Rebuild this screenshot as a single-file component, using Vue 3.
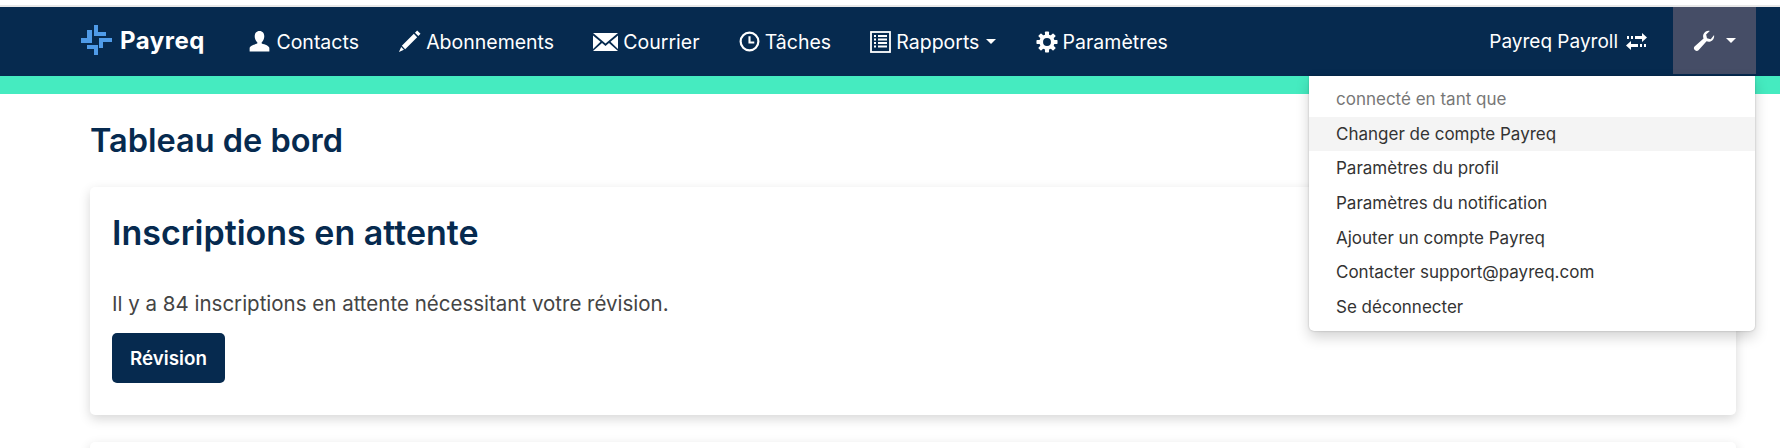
<template>
  <div class="page">
    <div class="top-strip"></div>
    <nav class="navbar">
      <a class="brand">
        <svg class="logo" viewBox="0 0 31 30" width="31" height="30">
          <path d="M6 5h5v13H0v-5h6z" />
          <path d="M13 0h4v7h8v4H13z" />
          <path d="M18 13h13v4h-9v6h-4z" />
          <path d="M6 20h11v10h-4v-6H6z" />
        </svg>
        <span>Payreq</span>
      </a>
      <ul class="nav-links">
        <li>
          <svg class="icon" viewBox="0 0 24 24" width="23" height="23">
            <path d="M12 1c3.300 0 5 2.500 5 5.500 0 2.600-1.200 5-2.700 6.200v1.500c3.500 1 8 2.600 8 4.800v3.500H1.700V19c0-2.200 4.500-3.800 8-4.800v-1.500C8.200 11.500 7 9.100 7 6.500 7 3.500 8.700 1 12 1z" />
          </svg>
          Contacts
        </li>
        <li>
          <svg class="icon" viewBox="0 0 24 24" width="23" height="23">
            <path d="M20 0.500l3.500 3.500-2.300 2.300-3.500-3.500zM16.500 4l3.500 3.500L7.500 20 4 16.500zM3.300 17.800l2.900 2.900L1 23z" />
          </svg>
          Abonnements
        </li>
        <li>
          <svg class="icon" viewBox="0 0 25 20" width="25" height="20">
            <path d="M0 1h25L12.500 11.500zM0 3.500l7.500 6.300L0 17zM25 3.500l-7.500 6.300L25 17zM9 11l3.500 3 3.500-3 9 8H0z" />
          </svg>
          Courrier
        </li>
        <li>
          <svg class="icon" viewBox="0 0 22 22" width="21" height="21">
            <circle cx="11" cy="11" r="9.300" class="line" stroke-width="2.300" />
            <path d="M11 5.500V12h5" class="line" stroke-width="2.200" />
          </svg>
          Tâches
        </li>
        <li>
          <svg class="icon" viewBox="0 0 21 22" width="21" height="22">
            <rect x="1" y="1" width="19" height="20" class="line" stroke-width="1.800" />
            <path d="M4 5h2M8 5h9M4 8.500h2M8 8.500h9M4 12h2M8 12h9M4 15.500h2M8 15.500h9" class="line" stroke-width="1.800" />
          </svg>
          Rapports
          <span class="caret"></span>
        </li>
        <li>
          <svg class="icon" viewBox="0 0 24 24" width="22" height="22">
            <rect v-for="a in teeth" :key="a" x="9.800" y="0.500" width="4.400" height="5" rx="0.800" :transform="`rotate(${a} 12 12)`" />
            <circle cx="12" cy="12" r="6.300" class="line" stroke-width="4" />
          </svg>
          Paramètres
        </li>
      </ul>
      <div class="nav-right">
        <span class="account">
          Payreq Payroll
          <svg class="icon" viewBox="0 0 21 17" width="21" height="17">
            <path d="M9 3h7V0l5 4.500L16 9V6H9zM5 3h2v3H5zM1 3h2v3H1zM12 11H5V8l-5 4.500L5 17v-3h7zM16 11h-2v3h2zM20 11h-2v3h2z" />
          </svg>
        </span>
        <div class="tools">
          <svg class="icon" viewBox="0 0 24 24" width="22" height="22">
            <path d="M23 5.500c.6 3-1 6-4 7-1.500.5-3 .3-4.200-.2L6 22.200c-1 1-2.700 1-3.700 0l-.6-.6c-1-1-1-2.600 0-3.600l9.800-8.800c-.5-1.200-.7-2.700-.2-4.200 1-3 4-4.600 7-4l-4 4 1 4 4 1z" />
          </svg>
          <span class="caret"></span>
        </div>
        <ul class="menu">
          <li class="muted">connecté en tant que</li>
          <li v-for="item in menuItems" :key="item" :class="{ active: item === menuItems[0] }">{{ item }}</li>
        </ul>
      </div>
    </nav>
    <div class="accent"></div>
    <main class="content">
      <h1>Tableau de bord</h1>
      <section class="card">
        <h2>Inscriptions en attente</h2>
        <p>Il y a 84 inscriptions en attente nécessitant votre révision.</p>
        <button class="btn">Révision</button>
      </section>
      <section class="card"></section>
    </main>
  </div>
</template>

<script setup>
const teeth = [0, 45, 90, 135, 180, 225, 270, 315]
const menuItems = [
  'Changer de compte Payreq',
  'Paramètres du profil',
  'Paramètres du notification',
  'Ajouter un compte Payreq',
  'Contacter support@payreq.com',
  'Se déconnecter'
]
</script>

<style>
html,
body {
  margin: 0;
  background: #fff;
  overflow: hidden;
}
</style>

<style scoped>
.page {
  height: 448px;
  overflow: hidden;
  font-family: Inter, "Liberation Sans", sans-serif;
  color: #444;
}

.top-strip {
  height: 5px;
  border-bottom: 2px solid #e8e8e8;
}

.navbar {
  height: 69px;
  padding-left: 81px;
  display: flex;
  align-items: center;
  background: #062a4f;
  color: #fff;
  font-size: 19.500px;
}

.icon {
  fill: #fff;
  flex: none;
}

.icon .line {
  fill: none;
  stroke: #fff;
}

.brand {
  display: flex;
  align-items: center;
  gap: 8px;
  margin-bottom: 3px;
  font-size: 24px;
  font-weight: 700;
  letter-spacing: 0.500px;
}

.logo {
  fill: #4f9be8;
}

.nav-links {
  display: flex;
  align-items: center;
  list-style: none;
  margin: 0 0 0 24px;
  padding: 0;
}

.nav-links li {
  display: flex;
  align-items: center;
  gap: 5px;
  padding: 0 19.600px;
  white-space: nowrap;
}

.caret {
  display: inline-block;
  margin-left: 2px;
  border-top: 5px solid #fff;
  border-left: 5px solid transparent;
  border-right: 5px solid transparent;
}

.nav-right {
  margin-left: auto;
  margin-right: 24px;
  height: 100%;
  display: flex;
  align-items: center;
  position: relative;
}

.account {
  display: flex;
  align-items: center;
  gap: 8px;
  margin-right: 26px;
  font-size: 19px;
  white-space: nowrap;
}

.tools {
  width: 83px;
  height: 67px;
  margin-bottom: 2px;
  background: #454d66;
  display: flex;
  align-items: center;
  justify-content: center;
  gap: 9px;
}

.menu {
  position: absolute;
  top: 69px;
  right: 1px;
  width: 446px;
  height: 255px;
  box-sizing: border-box;
  margin: 0;
  padding: 6px 0 0;
  list-style: none;
  background: #fff;
  border-radius: 0 0 5px 5px;
  box-shadow: 0 6px 14px rgba(0, 0, 0, 0.18), 0 0 2px rgba(0, 0, 0, 0.25);
  color: #333;
  font-size: 17px;
  z-index: 2;
}

.menu li {
  height: 34.700px;
  line-height: 34.700px;
  padding-left: 27px;
}

.menu .muted {
  color: #777;
}

.menu .active {
  background: #f4f4f4;
}

.accent {
  height: 18px;
  background: #45ebc0;
}

.content {
  padding: 0 44px 0 90px;
}

h1 {
  margin: 0;
  height: 93px;
  line-height: 94px;
  font-size: 32.500px;
  font-weight: 600;
  color: #062a4f;
}

.card {
  height: 228px;
  box-sizing: border-box;
  margin-bottom: 27px;
  padding: 22px 22px;
  background: #fff;
  border-radius: 5px;
  box-shadow: 0 4px 12px rgba(0, 0, 0, 0.16);
}

h2 {
  margin: 0;
  line-height: 48px;
  font-size: 34px;
  font-weight: 600;
  color: #062a4f;
}

p {
  margin: 32px 0 0;
  line-height: 30px;
  font-size: 20.500px;
}

.btn {
  display: block;
  width: 113px;
  height: 50px;
  margin-top: 14px;
  padding: 0;
  border: 0;
  border-radius: 5px;
  background: #062a4f;
  color: #fff;
  font-family: inherit;
  font-size: 18.800px;
  font-weight: 600;
}
</style>
